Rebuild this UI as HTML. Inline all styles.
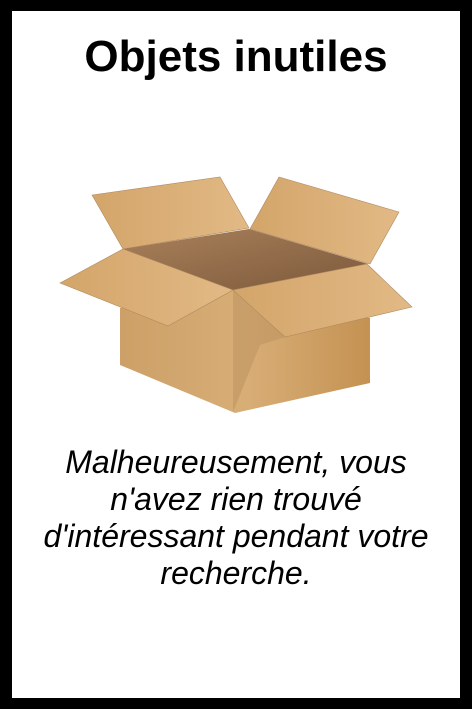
<!DOCTYPE html><html><head><style>
body{margin:0;width:472px;height:709px;background:#000;overflow:hidden;font-family:"Liberation Sans",sans-serif}
.c{position:absolute;left:12px;top:11px;width:448px;height:687px;background:#fff}
h1{position:absolute;top:32px;left:0;width:472px;margin:0;text-align:center;font-size:44px;font-weight:bold;line-height:50px}
p{position:absolute;top:444px;left:0;width:472px;margin:0;text-align:center;font-style:italic;font-size:32px;line-height:37px}
svg{position:absolute;left:0;top:0}
</style></head><body><div class="c"></div>
<h1>Objets inutiles</h1>
<svg width="472" height="709">
<defs>
<linearGradient id="f" x1="0" x2="1"><stop offset="0" stop-color="#d3a56a"/><stop offset="1" stop-color="#e2b985"/></linearGradient>
<linearGradient id="i" x1="0" x2="1" y1="0" y2="1"><stop offset="0" stop-color="#a9805a"/><stop offset="1" stop-color="#7d5a3c"/></linearGradient>
<linearGradient id="b" x1="0" x2="1"><stop offset="0" stop-color="#cca067"/><stop offset="0.5" stop-color="#d8ae77"/><stop offset="1" stop-color="#c49252"/></linearGradient>
</defs>
<polygon points="92,195 220,177 249,228 123,249" fill="url(#f)" stroke="#b08a60" stroke-width=".6"/>
<polygon points="279,177 399,212 370,264 250,229" fill="url(#f)" stroke="#b08a60" stroke-width=".6"/>
<polygon points="123,249 249,229 368,264 233,290" fill="url(#i)"/>
<polygon points="120,308 233,290 370,318 370,383 235,413 120,365" fill="url(#b)"/>
<polygon points="233,290 285,337 260,345 233,412" fill="#c09560" opacity=".6"/>
<polygon points="60,283 123,249 233,290 168,326" fill="url(#f)" stroke="#b08a60" stroke-width=".6"/>
<polygon points="233,290 367,264 412,307 285,337" fill="url(#f)" stroke="#b08a60" stroke-width=".6"/>
</svg>
<p>Malheureusement, vous<br>n'avez rien trouvé<br>d'intéressant pendant votre<br>recherche.</p>
</body></html>
